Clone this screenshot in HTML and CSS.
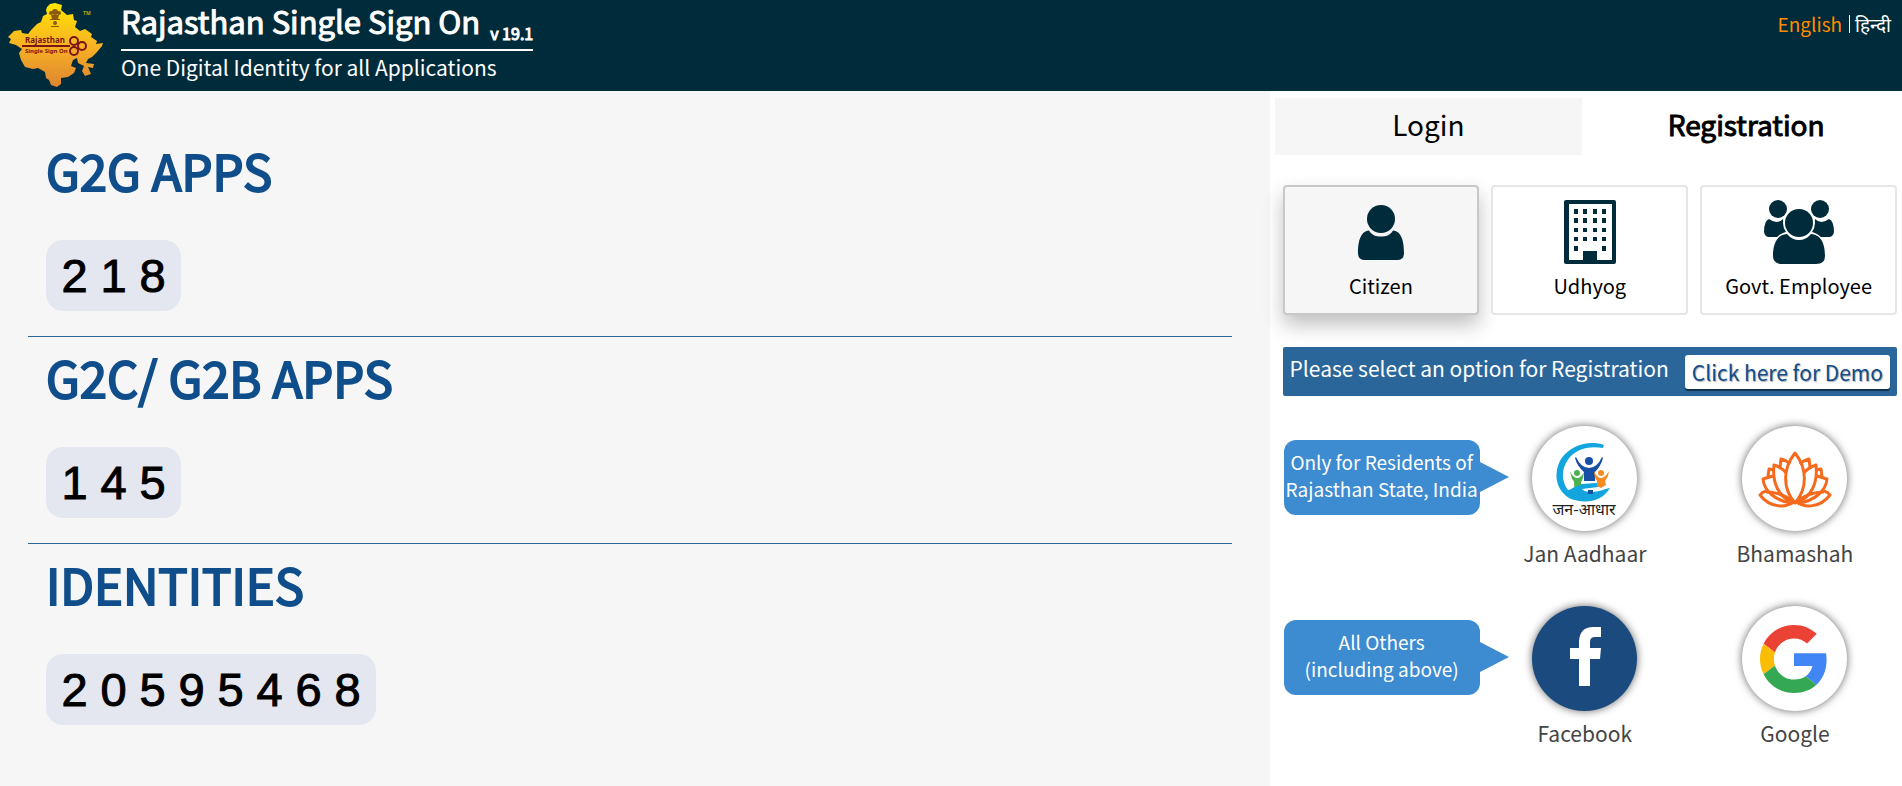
FILE: index.html
```html
<!DOCTYPE html>
<html lang="en">
<head>
  <meta charset="UTF-8" />
  <meta name="viewport" content="width=device-width, initial-scale=1.0" />
  <title>Rajasthan Single Sign On</title>
  <link rel="stylesheet" href="styles.css">
</head>
<body>
  <header class="header">
    <svg class="logo" viewBox="0 0 96 86" role="img" aria-label="Rajasthan SSO">
      <defs>
        <linearGradient id="gold" x1="0" y1="0" x2="0" y2="1">
          <stop offset="0" stop-color="#ffe600" />
          <stop offset="0.5" stop-color="#f8b324" />
          <stop offset="1" stop-color="#dd8430" />
        </linearGradient>
      </defs>
      <path fill="url(#gold)" d="M39 5 42 2 47 1 54 3 53 8 59 13 65 12 66 18 69 19 67 25 72 29 77 27 84 32 83 35 89 39 88 42 95 41 94 44 89 50 84 55 80 57 78 61 86 62 85 66 80 65 83 72 77 74 74 69 76 64 70 61 69 56 65 58 63 64 68 66 66 71 60 75 53 76 53 82 49 85 43 83 41 78 38 76 37 70 30 66 25 67 17 65 13 58 11 51 14 47 8 43 1 41 3 37 0 35 6 29 13 28 14 31 20 32 24 27 29 22 33 20 35 14 39 12 38 8z" />
      <g fill="#8a5a10">
        <circle cx="47" cy="10" r="3" /><circle cx="43" cy="11" r="2" /><circle cx="51" cy="11" r="2" />
        <path d="M43 13h8l-1 4h-6zM42 17h10v1H42zM43 24h8v1h-8z" />
        <circle cx="47" cy="21" r="2" />
      </g>
      <g fill="none" stroke="#7b1512" stroke-width="2">
        <path d="M14 44h48" />
        <circle cx="66" cy="39" r="4" /><circle cx="66" cy="49" r="4" /><circle cx="74" cy="44" r="4" />
      </g>
      <text x="17" y="41" class="logo-name">Rajasthan</text>
      <text x="17" y="51" class="logo-sub">Single Sign On</text>
      <text x="75" y="13" class="logo-tm">TM</text>
    </svg>
    <div class="brand">
      <h1>Rajasthan Single Sign On <small>v 19.1</small></h1>
      <p>One Digital Identity for all Applications</p>
    </div>
    <nav class="languages">
      <a href="#" class="active">English</a>
      <a href="#" lang="hi">हिन्दी</a>
    </nav>
  </header>

  <main class="content">
    <div class="stats">
      <section class="stat">
        <h2>G2G APPS</h2>
        <div class="counter"><span>2</span><span>1</span><span>8</span></div>
      </section>
      <section class="stat">
        <h2>G2C/ G2B APPS</h2>
        <div class="counter"><span>1</span><span>4</span><span>5</span></div>
      </section>
      <section class="stat">
        <h2>IDENTITIES</h2>
        <div class="counter"><span>2</span><span>0</span><span>5</span><span>9</span><span>5</span><span>4</span><span>6</span><span>8</span></div>
      </section>
    </div>

    <div class="panel">
      <div class="tabs">
        <button class="tab">Login</button>
        <button class="tab active">Registration</button>
      </div>

      <div class="types">
        <button class="type active">
          <svg viewBox="0 0 70 66" aria-hidden="true">
            <ellipse cx="35" cy="20" rx="14" ry="14" />
            <path d="M23 31.500C26 36.500 30 37.500 35 37.500S44 36.500 47 31.500C56 32 58 44 58 54Q58 61 51 61H19Q12 61 12 54C12 44 14 32 23 31.500z" />
          </svg>
          <span>Citizen</span>
        </button>
        <button class="type">
          <svg viewBox="0 0 70 66" aria-hidden="true">
            <path fill-rule="evenodd" d="M11 1H59Q61 1 61 3V63Q61 65 59 65H11Q9 65 9 63V3Q9 1 11 1zM14 5V61H28V52H42V61H57V5z" />
            <path d="M19 10h4v5h-4zM28 10h4v5h-4zM38 10h4v5h-4zM47 10h4v5h-4zM19 19h4v5h-4zM28 19h4v5h-4zM38 19h4v5h-4zM47 19h4v5h-4zM19 29h4v4h-4zM28 29h4v4h-4zM38 29h4v4h-4zM47 29h4v4h-4zM19 38h4v4h-4zM28 38h4v4h-4zM38 38h4v4h-4zM47 38h4v4h-4zM19 47h4v5h-4zM47 47h4v5h-4z" />
          </svg>
          <span>Udhyog</span>
        </button>
        <button class="type">
          <svg viewBox="0 0 70 66" aria-hidden="true">
            <circle cx="14" cy="10" r="9" /><circle cx="56" cy="10" r="9" />
            <path d="M5 20Q13 26 19 20C20 29 22 32 25 35Q17 37 15 38H5Q1 38 0 33Q0 22 5 20zM65 20Q57 26 51 20C50 29 48 32 45 35Q53 37 55 38H65Q69 38 70 33Q70 22 65 20z" />
            <path fill="#fff" d="M35 8a16 16 0 0 1 13 25C60 36 62 46 62 57H8C8 46 10 36 22 33A16 16 0 0 1 35 8z" />
            <circle cx="35" cy="24" r="14" />
            <path d="M23 35Q28 41 35 41T47 35C58 36 61 46 61 57Q61 65 52 65H18Q9 65 9 57C9 46 12 36 23 35z" />
          </svg>
          <span>Govt. Employee</span>
        </button>
      </div>

      <div class="notice">
        <span>Please select an option for Registration</span>
        <button>Click here for Demo</button>
      </div>

      <div class="providers">
        <div class="bubble">Only for Residents of<br>Rajasthan State, India</div>
        <a href="#" class="provider">
          <svg class="circle" viewBox="0 0 105 105" aria-hidden="true">
            <path fill="#12a5de" d="M72 19C57 14 39 19 29 33C20 49 25 66 39 73C53 78 70 76 78 62C72 63 66 66 60 66C54 66 52 65 50 63L66 61C68 60 68 57 64 57L50 58C43 59 40 64 36 64C30 56 28 43 38 31C47 22 58 20 71 22z" />
            <circle cx="57" cy="35" r="4" fill="#164fa3" />
            <path fill="#164fa3" d="M44 31Q49 42 57 42T70 31L71 32Q69 40 63 46V55H52V46Q45 40 43 32zM56 64h5v4h-5z" />
            <circle cx="45" cy="47" r="3" fill="#4caf50" />
            <path fill="#4caf50" d="M38 45Q41 52 45 52T52 46Q51 54 49 56V59L42 61Q43 55 40 53z" />
            <circle cx="69" cy="47" r="3" fill="#f58c23" />
            <path fill="#f58c23" d="M62 45Q65 52 69 52T77 45Q76 52 73 55L74 59L69 62L65 60V55Q62 51 62 45z" />
            <text x="52" y="89" text-anchor="middle" class="jan" lang="hi">जन-आधार</text>
          </svg>
          <span>Jan Aadhaar</span>
        </a>
        <a href="#" class="provider">
          <svg class="circle" viewBox="0 0 105 105" aria-hidden="true">
            <g fill="none" stroke="#f56a1d" stroke-width="3" stroke-linejoin="round">
              <path d="M53 77C40 62 41 42 53 27C65 42 66 62 53 77z" />
              <path d="M51 76C37 72 30 57 32 39C38 41 42 44 44 47M55 76C69 72 76 57 74 39C68 41 64 44 62 47" />
              <path d="M38 41L39 33Q44 34 48 38M68 41L67 33Q62 34 58 38" />
              <path d="M31 50L21 53C22 65 34 75 49 77M75 50L85 53C84 65 72 75 57 77" />
              <path d="M26 51L27 43L32 44M80 51L79 43L74 44" />
              <path d="M24 65Q20 66 18 69C28 82 43 82 52 76C42 68 34 66 24 66M82 65Q86 66 88 69C78 82 63 82 54 76C64 68 72 66 82 66" />
            </g>
          </svg>
          <span>Bhamashah</span>
        </a>

        <div class="bubble">All Others<br>(including above)</div>
        <a href="#" class="provider">
          <svg class="circle facebook" viewBox="0 0 105 105" aria-hidden="true">
            <path fill="#fff" d="M69 21V31H63Q58 31 58 36V42H69L68 53H58V80H47V53H38V42H47V35Q48 21 61 21z" />
          </svg>
          <span>Facebook</span>
        </a>
        <a href="#" class="provider">
          <svg class="circle" viewBox="0 0 105 105" aria-hidden="true">
            <g transform="translate(18 19) scale(1.417)">
              <path fill="#ea4335" d="M24 9.500c3.540 0 6.710 1.220 9.210 3.600l6.850-6.850C35.900 2.380 30.470 0 24 0 14.620 0 6.510 5.380 2.560 13.220l7.980 6.190C12.430 13.720 17.740 9.500 24 9.500z" />
              <path fill="#4285f4" d="M46.980 24.550c0-1.570-.15-3.090-.38-4.550H24v9.020h12.940c-.58 2.960-2.260 5.480-4.780 7.180l7.730 6c4.510-4.180 7.090-10.360 7.090-17.650z" />
              <path fill="#fbbc05" d="M10.530 28.590c-.48-1.450-.76-2.990-.76-4.590s.27-3.140.76-4.590l-7.980-6.190C.92 16.460 0 20.120 0 24c0 3.880.92 7.540 2.560 10.780l7.970-6.190z" />
              <path fill="#34a853" d="M24 48c6.480 0 11.930-2.130 15.890-5.810l-7.730-6c-2.150 1.450-4.920 2.300-8.160 2.300-6.260 0-11.570-4.220-13.470-9.910l-7.980 6.190C6.510 42.620 14.620 48 24 48z" />
            </g>
          </svg>
          <span>Google</span>
        </a>
      </div>
    </div>
  </main>
</body>
</html>
```

FILE: styles.css
```css
* {
  box-sizing: border-box;
}

body {
  font-family: 'Noto Sans CJK SC', 'Noto Sans', sans-serif;
  background: #fff;
  color: #000;
  margin: 0;
  min-height: 100vh;
  display: flex;
  flex-direction: column;
}

h1, h2, p {
  margin: 0;
  font-weight: 400;
}

a {
  text-decoration: none;
}

button {
  font-family: inherit;
  color: inherit;
  cursor: pointer;
}

/* header */
.header {
  background: #002b3a;
  color: #fff;
  height: 91px;
  padding: 0 11px 0 8px;
  display: flex;
  align-items: flex-start;
}

.logo {
  width: 96px;
  height: 86px;
  margin: 2px 17px 0 0;
}

.logo text {
  font-family: 'Noto Sans', sans-serif;
  font-weight: 700;
  fill: #7b1512;
}

.logo .logo-name {
  font-size: 8px;
}

.logo .logo-sub {
  font-size: 6px;
}

.logo .logo-tm {
  font-size: 5px;
  fill: #b8a800;
}

.brand h1 {
  display: flex;
  align-items: flex-end;
  gap: 10px;
  height: 51px;
  padding-bottom: 4px;
  font-size: 31px;
  line-height: 48px;
  border-bottom: 2px solid #fff;
  -webkit-text-stroke: 1px #fff;
}

.brand h1 small {
  font-size: 16px;
  line-height: 24px;
}

.brand p {
  font-size: 21px;
  line-height: 32px;
}

.languages {
  margin-left: auto;
  padding-top: 10px;
  display: flex;
  font-size: 19px;
  line-height: 28px;
}

.languages a {
  color: #fff;
}

.languages a + a {
  margin-left: 7px;
  padding-left: 6px;
  background: linear-gradient(#fff, #fff) 0 5px / 1px 18px no-repeat;
}

.languages .active {
  color: #ff8c00;
}

/* page */
.content {
  flex: 1;
  display: flex;
}

.stats {
  flex: 0 0 66.75%;
  background: #f6f6f6;
  padding: 39px 38px 0 28px;
}

.stat {
  padding: 4px 18px 25px;
  border-bottom: 1px solid #2b669a;
}

.stat:last-child {
  border-bottom: none;
}

.stat h2 {
  color: #104e8b;
  font-size: 49px;
  line-height: 72px;
  margin-bottom: 34px;
  -webkit-text-stroke: 2px #104e8b;
}

.counter {
  display: inline-flex;
  vertical-align: top;
  background: #e4e7ef;
  border-radius: 17px;
  padding: 0 9px;
  height: 71px;
  align-items: center;
}

.counter span {
  width: 39px;
  text-align: center;
  font-family: 'Liberation Sans', sans-serif;
  font-size: 47px;
  -webkit-text-stroke: 1px #000;
}

/* right side */
.panel {
  flex: 1;
  padding: 7px 2px 0 5px;
}

.tabs {
  display: flex;
  gap: 10px;
}

.tab {
  flex: 1;
  height: 57px;
  padding: 0 0 5px;
  border: none;
  background: #f6f6f6;
  font-size: 28px;
}

.tab.active {
  background: #fff;
  -webkit-text-stroke: 1px #000;
}

.types {
  display: grid;
  grid-template-columns: repeat(3, 1fr);
  gap: 12px;
  margin: 30px 3px 32px 8px;
}

.type {
  height: 130px;
  padding: 12px 0 0;
  border: 2px solid #e6e6e6;
  border-radius: 4px;
  background: #fff;
  display: flex;
  flex-direction: column;
  align-items: center;
  font-size: 20px;
  line-height: 28px;
}

.type.active {
  background: #f6f6f6;
  border-color: #c8c8c8;
  box-shadow: 0 10px 20px rgba(0, 0, 0, 0.25);
}

.type svg {
  width: 70px;
  height: 66px;
  margin-bottom: 7px;
  fill: #002b3a;
}

.notice {
  margin: 0 3px 30px 8px;
  height: 49px;
  padding: 0 7px;
  display: flex;
  justify-content: space-between;
  align-items: center;
  background: #2b669a;
  border-radius: 2px;
  color: #fff;
  font-size: 21px;
  line-height: 32px;
  white-space: nowrap;
}

.notice span {
  padding-bottom: 8px;
}

.notice button {
  height: 34px;
  border: none;
  border-radius: 3px;
  padding: 0 7px;
  background: #fff;
  color: #104e8b;
  font-size: 21px;
  line-height: 34px;
  text-shadow: 1px 1px 1px #aaa;
  box-shadow: 0 2px 1px #12304a;
}

.providers {
  display: grid;
  grid-template-columns: repeat(3, 1fr);
  row-gap: 37px;
  margin-left: -5px;
}

.bubble {
  position: relative;
  height: 75px;
  margin: 14px 0 0 14px;
  padding-top: 8px;
  border-radius: 12px;
  background: #3d8bd0;
  color: #fff;
  text-align: center;
  font-size: 19px;
  line-height: 27px;
  white-space: nowrap;
}

.bubble::after {
  content: "";
  position: absolute;
  left: 100%;
  top: 22px;
  border: solid transparent;
  border-width: 15px 0 15px 29px;
  border-left-color: #3d8bd0;
}

.provider {
  display: flex;
  flex-direction: column;
  align-items: center;
  color: #444;
  font-size: 21px;
  line-height: 32px;
}

.circle {
  width: 105px;
  height: 105px;
  margin-bottom: 6px;
  border-radius: 50%;
  background: #fff;
  box-shadow: 0 0 8px rgba(0, 0, 0, 0.6);
}

.circle.facebook {
  background: #1b4a7e;
}

.jan {
  font-size: 16px;
  fill: #222;
}
```
